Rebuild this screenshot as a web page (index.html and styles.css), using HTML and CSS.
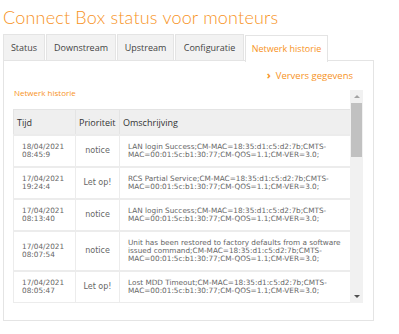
FILE: index.html
```html
<!DOCTYPE html>
<html>
  <head>
    <title>Connect Box status voor monteurs</title>
    <link rel="stylesheet" href="styles.css">
  </head>
  <body>
    <h1 class="title">Connect Box status voor monteurs</h1>

    <ul class="tabs">
      <li class="tab-status">Status</li>
      <li class="tab-down">Downstream</li>
      <li class="tab-up">Upstream</li>
      <li class="tab-config">Configuratie</li>
      <li class="tab-history active">Netwerk historie</li>
    </ul>

    <div class="panel">
      <div class="refresh"><span class="chevron">&rsaquo;</span>Ververs gegevens</div>

      <div class="history">
        <div class="history-body">
          <h2>Netwerk historie</h2>
          <table>
            <thead>
              <tr>
                <th class="col-time">Tijd</th>
                <th class="col-prio">Prioriteit</th>
                <th>Omschrijving</th>
              </tr>
            </thead>
            <tbody>
              <tr>
                <td>18/04/2021<br />08:45:9</td>
                <td class="prio">notice</td>
                <td>LAN login Success;CM-MAC=18:35:d1:c5:d2:7b;CMTS-MAC=00:01:5c:b1:30:77;CM-QOS=1.1;CM-VER=3.0;</td>
              </tr>
              <tr>
                <td>17/04/2021<br />19:24:4</td>
                <td class="prio">Let op!</td>
                <td>RCS Partial Service;CM-MAC=18:35:d1:c5:d2:7b;CMTS-MAC=00:01:5c:b1:30:77;CM-QOS=1.1;CM-VER=3.0;</td>
              </tr>
              <tr>
                <td>17/04/2021<br />08:13:40</td>
                <td class="prio">notice</td>
                <td>LAN login Success;CM-MAC=18:35:d1:c5:d2:7b;CMTS-MAC=00:01:5c:b1:30:77;CM-QOS=1.1;CM-VER=3.0;</td>
              </tr>
              <tr>
                <td>17/04/2021<br />08:07:54</td>
                <td class="prio">notice</td>
                <td>Unit has been restored to factory defaults from a software issued command;CM-MAC=18:35:d1:c5:d2:7b;CMTS-MAC=00:01:5c:b1:30:77;CM-QOS=1.1;CM-VER=3.0;</td>
              </tr>
              <tr>
                <td>17/04/2021<br />08:05:47</td>
                <td class="prio">Let op!</td>
                <td>Lost MDD Timeout;CM-MAC=18:35:d1:c5:d2:7b;CMTS-MAC=00:01:5c:b1:30:77;CM-QOS=1.1;CM-VER=3.0;</td>
              </tr>
            </tbody>
          </table>
        </div>
        <div class="scrollbar">
          <div class="arrow arrow-up"></div>
          <div class="thumb"></div>
          <div class="arrow arrow-down"></div>
        </div>
      </div>
    </div>
  </body>
</html>
```

FILE: styles.css
```css
body {
  margin: 0;
  padding: 0 3px;
  width: 371px;
  font-family: "Open Sans", sans-serif;
  background-color: #fff;
}

.title {
  margin: 0;
  padding-top: 6px;
  height: 28px;
  font-family: Lato, sans-serif;
  font-size: 18px;
  line-height: 22px;
  font-weight: 300;
  color: #f7931e;
  letter-spacing: 0.2px;
}

.tabs {
  display: flex;
  list-style-type: none;
  margin: 0;
  padding: 0;
  height: 26px;
}

.tabs li {
  box-sizing: border-box;
  height: 26px;
  margin-right: 1px;
  border: 1px solid #e4e4e4;
  border-bottom: none;
  background-color: #f2f2f2;
  font-size: 9px;
  line-height: 25px;
  text-align: center;
  color: #444;
}

.tab-status { width: 42px; }
.tab-down { width: 70px; }
.tab-up { width: 57px; }
.tab-config { width: 69px; }
.tab-history { width: 83px; }

.tabs li.active {
  position: relative;
  z-index: 1;
  height: 27px;
  margin-top: 1px;
  background-color: #fff;
  color: #f7931e;
}

.panel {
  box-sizing: border-box;
  height: 261px;
  padding: 9px 10px 17px 9px;
  border: 1px solid #e4e4e4;
}

.refresh {
  height: 12px;
  text-align: right;
  padding-right: 10px;
  font-size: 9.5px;
  line-height: 12px;
  color: #f7931e;
}

.chevron {
  font-weight: bold;
  font-size: 11px;
  line-height: 10px;
  margin-right: 5px;
}

.history {
  display: flex;
  margin-top: 6px;
  height: 215px;
}

.history-body {
  flex: 1;
  overflow: hidden;
}

.scrollbar {
  display: flex;
  flex-direction: column;
  width: 13px;
  margin-top: 2px;
  background-color: #f1f1f1;
}

.arrow {
  width: 0;
  height: 0;
  margin: 5px auto;
  border-left: 3px solid transparent;
  border-right: 3px solid transparent;
}

.arrow-up {
  border-bottom: 3px solid #a3a3a3;
}

.arrow-down {
  margin-top: auto;
  margin-bottom: 5px;
  border-top: 3px solid #505050;
}

.thumb {
  height: 54px;
  margin: 0 1px;
  background-color: #c1c1c1;
}

.history h2 {
  margin: 0 0 0 1px;
  font-size: 8px;
  line-height: 10px;
  font-weight: normal;
  color: #f7931e;
}

table {
  margin-top: 11px;
  width: 338px;
  border-collapse: collapse;
  table-layout: fixed;
  font-family: "DejaVu Sans", sans-serif;
  font-size: 7.3px;
}

th {
  height: 24px;
  padding: 0 3px;
  text-align: left;
  font-family: "Open Sans", sans-serif;
  font-weight: normal;
  font-size: 9px;
  color: #333;
  background-color: #efefef;
  border: 1px solid #e4e4e4;
}

.col-time { width: 55px; }
.col-prio { width: 37px; }

td {
  padding: 7px 8px;
  line-height: 8px;
  vertical-align: middle;
  color: #666;
  border: 1px solid #ececec;
  border-width: 2px 1px;
}

td.prio {
  text-align: center;
  padding: 0;
  font-size: 8px;
}
```
